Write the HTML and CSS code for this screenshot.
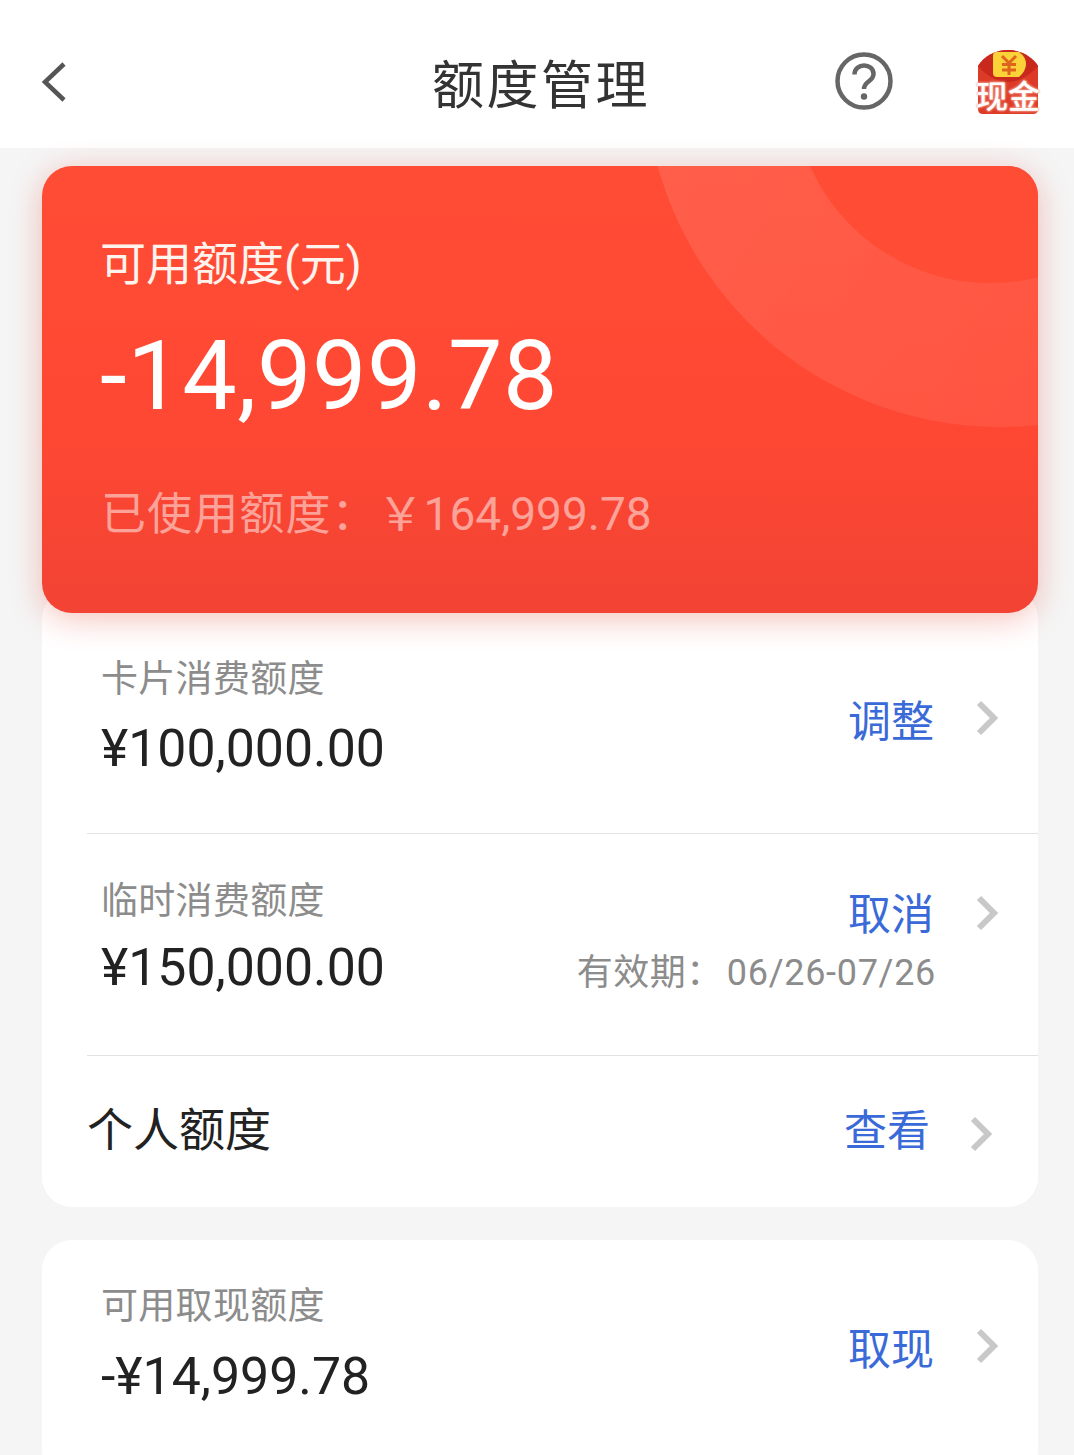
FILE: index.html
```html
<!DOCTYPE html>
<html lang="zh-CN">
<head>
  <meta charset="UTF-8">
  <title>额度管理</title>
  <link rel="stylesheet" href="styles.css">
</head>
<body>
  <header class="topbar">
    <svg class="back-icon" viewBox="0 0 26 42"><path d="M23 3 L4 21 L23 39" /></svg>
    <h1 class="topbar-title">额度管理</h1>
    <svg class="help-icon" viewBox="0 0 58 58">
      <circle cx="29" cy="29" r="26.5" />
      <path d="M19.500 22.500 C19.500 10.500 38.500 10.500 38.500 22 C38.500 29.500 29 29 29 37" />
      <circle class="help-dot" cx="29" cy="44.500" r="3.200" />
    </svg>
    <div class="cash-badge">
      <svg class="cash-envelope" viewBox="0 0 64 66">
        <path class="env-body" d="M2 17 C8 7 20 1 32 1 C44 1 56 7 62 17 L62 60 Q62 65 57 65 L7 65 Q2 65 2 60 Z" />
        <path class="env-flap" d="M2 17 C8 7 20 1 32 1 C44 1 56 7 62 17 C52 29 40 33 32 33 C24 33 12 29 2 17 Z" />
        <path class="env-coin" d="M21 3 H43 Q50 8 50 15 Q50 22 43 28 H21 Q17 28 17 24 V7 Q17 3 21 3 Z" />
        <path class="env-yen" d="M26 7 L33 14 L40 7 M33 14 L33 26 M26 15.500 H40 M26 21 H40" />
      </svg>
      <span class="cash-text">现金</span>
    </div>
  </header>

  <main class="content">
    <section class="limit-card">
      <div class="limit-circle limit-circle-outer"></div>
      <div class="limit-circle limit-circle-inner"></div>
      <div class="limit-label">可用额度(元)</div>
      <div class="limit-amount">-14,999.78</div>
      <div class="limit-used"><span>已使用额度：</span><span class="limit-used-num">￥164,999.78</span></div>
    </section>

    <section class="panel panel-main">
      <div class="row row-first">
        <div class="row-left">
          <div class="row-label">卡片消费额度</div>
          <div class="row-amount">¥100,000.00</div>
        </div>
        <div class="row-right">
          <a class="row-link">调整</a>
          <svg class="chevron" viewBox="0 0 24 36"><path d="M4 3 L19 18 L4 33" /></svg>
        </div>
      </div>

      <div class="row row-second">
        <div class="row-left">
          <div class="row-label">临时消费额度</div>
          <div class="row-amount">¥150,000.00</div>
        </div>
        <div class="row-stack">
          <div class="row-right">
            <a class="row-link">取消</a>
            <svg class="chevron" viewBox="0 0 24 36"><path d="M4 3 L19 18 L4 33" /></svg>
          </div>
          <div class="row-expiry">有效期：<span class="row-expiry-date">06/26-07/26</span></div>
        </div>
      </div>

      <div class="row row-personal">
        <div class="personal-title">个人额度</div>
        <div class="row-right">
          <a class="row-link">查看</a>
          <svg class="chevron" viewBox="0 0 24 36"><path d="M4 3 L19 18 L4 33" /></svg>
        </div>
      </div>
    </section>

    <section class="panel panel-cash">
      <div class="row row-cash">
        <div class="row-left">
          <div class="row-label">可用取现额度</div>
          <div class="row-amount">-¥14,999.78</div>
        </div>
        <div class="row-right">
          <a class="row-link">取现</a>
          <svg class="chevron" viewBox="0 0 24 36"><path d="M4 3 L19 18 L4 33" /></svg>
        </div>
      </div>
    </section>
  </main>
</body>
</html>
```

FILE: styles.css
```css
html, body {
  margin: 0;
  padding: 0;
  height: 1455px;
  overflow: hidden;
  background: #f5f5f5;
  font-family: Roboto, "Noto Sans CJK SC", sans-serif;
}

/* top bar */
.topbar {
  position: relative;
  height: 148px;
  background: #fff;
  box-sizing: border-box;
}

.back-icon {
  position: absolute;
  left: 41px;
  top: 61px;
  width: 26px;
  height: 42px;
  fill: none;
  stroke: #555;
  stroke-width: 4.500;
}

.topbar-title {
  margin: 0;
  padding: 51px 0 0 8px;
  text-align: center;
  font-size: 52px;
  line-height: 72px;
  font-weight: 400;
  letter-spacing: 2.500px;
  color: #333;
}

.help-icon {
  position: absolute;
  left: 835px;
  top: 52px;
  width: 58px;
  height: 58px;
  fill: none;
  stroke: #666;
  stroke-width: 4.500;
}

.help-dot {
  fill: #666;
  stroke: none;
}

.cash-badge {
  position: absolute;
  left: 976px;
  top: 49px;
  width: 64px;
  height: 66px;
}

.cash-envelope {
  width: 64px;
  height: 66px;
  display: block;
}

.env-body { fill: #dd3b27; }
.env-flap { fill: #c9291c; }
.env-coin { fill: #fbd339; }
.env-yen {
  fill: none;
  stroke: #e0641e;
  stroke-width: 3;
}

.cash-text {
  position: absolute;
  left: 0;
  right: 0;
  top: 30px;
  text-align: center;
  font-size: 32px;
  line-height: 36px;
  font-weight: 500;
  color: #fff;
  white-space: nowrap;
  text-shadow: 0 0 2px #f09a88, 0 0 2px #f09a88, 0 0 3px #f5b5a6;
}

/* content */
.content {
  padding: 18px 36px 0 42px;
}

.limit-card {
  position: relative;
  z-index: 1;
  height: 447px;
  box-sizing: border-box;
  padding: 64px 58px 0;
  border-radius: 30px;
  overflow: hidden;
  background: linear-gradient(180deg, #ff4c35 0%, #ff4833 55%, #f24334 100%);
  color: #fff;
}

.content::before {
  content: "";
  position: absolute;
  left: 42px;
  top: 166px;
  width: 996px;
  height: 447px;
  border-radius: 30px;
  box-shadow: 0 6px 32px rgba(225, 70, 50, 0.33);
  z-index: 1;
}

.limit-circle {
  position: absolute;
  border-radius: 50%;
}

.limit-circle-outer {
  left: 603px;
  top: -449px;
  width: 710px;
  height: 710px;
  background: linear-gradient(120deg, rgba(255, 255, 255, 0.13), rgba(255, 255, 255, 0.04));
}

.limit-circle-inner {
  left: 751px;
  top: -277px;
  width: 394px;
  height: 394px;
  background: #ff4c35;
}

.limit-label,
.limit-amount,
.limit-used {
  position: relative;
}

.limit-label {
  font-size: 46px;
  line-height: 68px;
  color: #fff3ee;
}

.limit-amount {
  margin-top: 22px;
  font-size: 97px;
  line-height: 112px;
  letter-spacing: 0.5px;
}

.limit-used {
  margin-top: 50px;
  padding-left: 1px;
  font-size: 45px;
  line-height: 64px;
  letter-spacing: 1.100px;
  color: rgba(255, 255, 255, 0.5);
  white-space: nowrap;
}

.limit-used-num {
  font-size: 46px;
  letter-spacing: 0;
}

/* white panels */
.panel {
  background: #fff;
  border-radius: 30px;
}

.panel-main {
  margin-top: -24px;
  padding-top: 24px;
  height: 618px;
  box-sizing: border-box;
}

.panel-cash {
  margin-top: 33px;
  height: 240px;
}

.row {
  display: flex;
  justify-content: space-between;
  box-sizing: border-box;
  margin-left: 45px;
  padding-left: 14px;
  padding-right: 39px;
}

.row-first {
  height: 221px;
  padding-top: 41px;
  border-bottom: 1px solid #e2e2e2;
}

.row-second {
  height: 222px;
  padding-top: 42px;
  border-bottom: 1px solid #e2e2e2;
}

.row-personal {
  height: 151px;
  padding: 44px 45px 0 0;
}

.row-cash {
  padding-top: 41px;
}

.row-label {
  font-size: 37px;
  line-height: 52px;
  letter-spacing: 0.3px;
  color: #8c8c8c;
}

.row-amount {
  margin-top: 8px;
  font-size: 51.800px;
  line-height: 64px;
  color: #222;
}

.row-first .row-amount {
  margin-top: 11px;
}

.row-cash .row-amount {
  margin-top: 12px;
}

.row-right {
  display: flex;
  align-items: center;
  justify-content: flex-end;
  gap: 41px;
  height: 68px;
}

.row-first .row-right {
  margin-top: 30px;
}

.row-first .row-link {
  margin-top: 8px;
}

.row-second .row-link {
  margin-top: 4px;
}

.row-personal .row-right {
  gap: 39px;
}

.row-personal .row-link {
  margin-bottom: 6px;
}

.row-cash .row-right {
  margin-top: 35px;
}

.row-cash .chevron {
  margin-bottom: 8px;
}

.row-link {
  font-size: 43px;
  line-height: 60px;
  color: #3a6ad8;
}

.chevron {
  width: 24px;
  height: 36px;
  fill: none;
  stroke: #c8c8c8;
  stroke-width: 6;
}

.row-stack {
  margin-top: 3px;
}

.row-expiry {
  margin-top: 2px;
  margin-right: 63px;
  font-size: 36px;
  line-height: 48px;
  letter-spacing: 0.5px;
  color: #8c8c8c;
  white-space: nowrap;
}

.row-expiry-date {
  margin-left: 4px;
  letter-spacing: 0.7px;
}

.personal-title {
  font-size: 46px;
  line-height: 60px;
  color: #222;
}
```
